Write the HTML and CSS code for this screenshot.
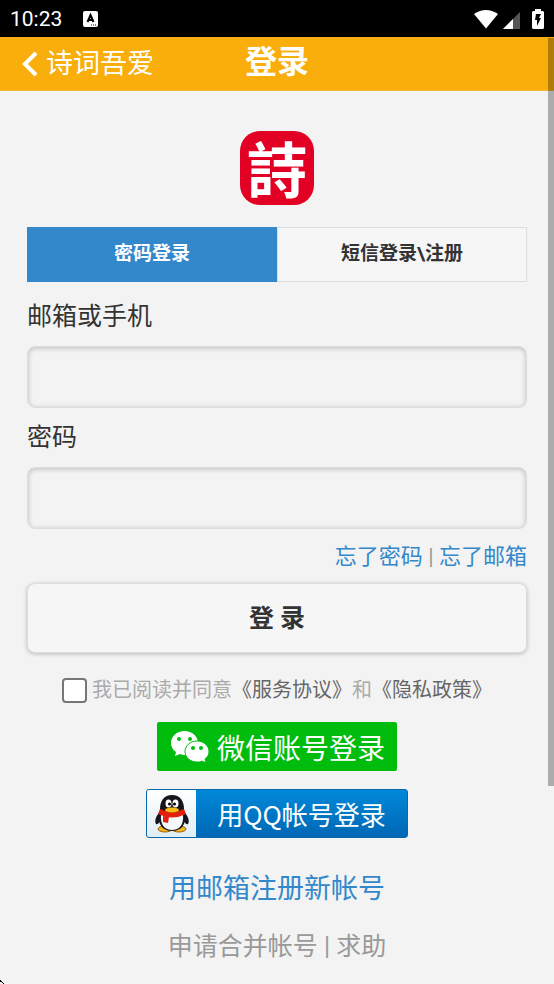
FILE: index.html
```html
<!DOCTYPE html>
<html lang="zh-CN">
<head>
  <meta charset="UTF-8">
  <meta name="viewport" content="width=device-width, initial-scale=1">
  <title>登录</title>
  <link rel="stylesheet" href="styles.css">
</head>
<body>
<div class="status">
  <span class="time">10:23</span>
  <svg class="status-app" width="15" height="16" viewBox="0 0 15 16">
    <rect width="15" height="16" rx="2" fill="#fff"/>
    <path d="M4.5 11L7.5 4L10.5 11M5.5 9H9.5" fill="none" stroke="#000" stroke-width="2"/>
    <path d="M8 14h1M10 14h1M12 14h1" stroke="#000" stroke-width="1"/>
  </svg>
  <div class="status-icons">
    <svg width="26" height="20" viewBox="0 0 26 20"><path d="M1 5Q13-3 25 5L13 19.500Z" fill="#fff"/></svg>
    <svg width="17" height="17" viewBox="0 0 17 17"><path d="M17 0V17H0Z" fill="#555"/><path d="M10 7V17H0Z" fill="#fff"/></svg>
    <svg width="12" height="20" viewBox="0 0 12 20"><path d="M3 0H9V2H11L12 3V19L11 20H1L0 19V3L1 2H3Z" fill="#fff"/><path d="M4 5H9L7 9H9L5 17V11H3Z" fill="#000"/></svg>
  </div>
</div>
<div class="page">
  <header class="header">
    <a class="back" href="#">
      <svg width="16" height="26" viewBox="0 0 16 26"><path d="M14 2L3 13L14 24" fill="none" stroke="#fff" stroke-width="4"/></svg>
      <span>诗词吾爱</span>
    </a>
    <h1>登录</h1>
  </header>
  <form class="login">
    <div class="logo" lang="zh-TW">詩</div>
    <div class="tabs">
      <button type="button" class="tab active">密码登录</button>
      <button type="button" class="tab">短信登录\注册</button>
    </div>
    <label class="label" for="user">邮箱或手机</label>
    <input class="field" type="text" id="user">
    <label class="label" for="pass">密码</label>
    <input class="field" type="password" id="pass">
    <p class="forgot"><a href="#">忘了密码</a> | <a href="#">忘了邮箱</a></p>
    <button type="submit" class="submit">登 录</button>
    <div class="agree">
      <input type="checkbox" id="agree">
      <label for="agree">我已阅读并同意<a href="#">《服务协议》</a>和<a href="#">《隐私政策》</a></label>
    </div>
    <a class="wechat" href="#">
      <svg width="38" height="32" viewBox="0 0 38 32">
        <path d="M13.500 0C6 0 0 5 0 12C0 16 2 19 5 21L4 25L9 23C11 24 13 24 15 24C24 24 27 18 27 12C27 5 21 0 13.500 0Z" fill="#fff"/>
        <path d="M26 10C19 10 14 15 14 20.500C14 27 20 31 26 31C28 31 30 31 31 30L35 32L34 28C37 26 38 23 38 20.500C38 15 33 10 26 10Z" fill="#fff" stroke="#00bd0d" stroke-width="1"/>
        <g fill="#00bd0d"><circle cx="8" cy="8" r="2"/><circle cx="19" cy="8" r="2"/><circle cx="22" cy="17" r="2"/><circle cx="30" cy="17" r="2"/></g>
      </svg>
      <span>微信账号登录</span>
    </a>
    <a class="qq" href="#">
      <span class="qq-icon">
        <svg width="34" height="38" viewBox="0 0 34 38">
          <ellipse cx="10" cy="34" rx="7" ry="3" fill="#f5b51b" stroke="#a45a08"/>
          <ellipse cx="24" cy="34" rx="7" ry="3" fill="#f5b51b" stroke="#a45a08"/>
          <path d="M6 16C1 20-1 26 1 29C3 30 5 27 6 24M28 16C33 20 35 26 33 29C31 30 29 27 28 24" fill="#14161c"/>
          <path d="M17 0C9 0 5 6 5 14L4 24C4 31 9 36 17 36S30 31 30 24L29 14C29 6 25 0 17 0Z" fill="#14161c"/>
          <path d="M6 20C5 30 10 35 17 35S29 30 28 20Z" fill="#f5f7fa"/>
          <path d="M5 14Q17 20 29 14L31 19Q17 26 3 19Z" fill="#e3200f"/>
          <path d="M8 21L14 22L13 28L8 27Z" fill="#e3200f"/>
          <ellipse cx="13.500" cy="8.500" rx="3" ry="4" fill="#fff"/>
          <ellipse cx="20.500" cy="8.500" rx="3" ry="4" fill="#fff"/>
          <circle cx="14.500" cy="9" r="1.500" fill="#000"/><circle cx="19.500" cy="9" r="1.500" fill="#000"/>
          <ellipse cx="17" cy="15" rx="7" ry="2.500" fill="#fcbd18" stroke="#a86808" stroke-width=".5"/>
        </svg>
      </span>
      <span class="qq-text">用QQ帐号登录</span>
    </a>
    <a class="register" href="#">用邮箱注册新帐号</a>
    <p class="help"><a href="#">申请合并帐号</a> | <a href="#">求助</a></p>
  </form>
  <div class="scrollbar"></div>
  <svg class="corner" width="4" height="4" viewBox="0 0 4 4"><path d="M0 0h1v1h1v1H0zM2 2h1v1H2zM3 3h1v1H3z" fill="#000"/></svg>
</div>
</body>
</html>
```
FILE: styles.css
```css
* {
  box-sizing: border-box;
}
body {
  margin: 0;
  min-height: 100vh;
  display: flex;
  flex-direction: column;
  background: #f3f3f3;
  color: #333;
  font-family: Roboto, "Noto Sans CJK SC", sans-serif;
  font-size: 25px;
}
a {
  color: #3388cc;
  text-decoration: none;
}
p, h1 {
  margin: 0;
}
svg {
  display: block;
}
button, input {
  font-family: inherit;
  color: inherit;
}
.status {
  height: 37px;
  padding: 0 10px;
  display: flex;
  align-items: center;
  background: #000;
  color: #fff;
}
.time {
  font-size: 21px;
}
.status-app {
  margin-left: 21px;
}
.status-icons {
  margin-left: auto;
  display: flex;
  align-items: flex-end;
  gap: 4px;
}
.status-icons svg:last-child {
  margin-left: 8px;
}
.page {
  position: relative;
  flex: 1;
}
.header {
  height: 54px;
  padding: 0 22px;
  display: grid;
  grid-template-columns: 1fr auto 1fr;
  align-items: center;
  background: #f9ae0c;
  border-bottom: 1px solid #f5b938;
  color: #fff;
}
.header h1 {
  font-size: 32px;
  line-height: 48px;
  padding-bottom: 4px;
}
.back {
  display: flex;
  align-items: center;
  gap: 8px;
  color: #fff;
  font-size: 27px;
  line-height: 40px;
}
.login {
  display: flex;
  flex-direction: column;
  padding: 40px 27px 16px;
}
.logo {
  align-self: center;
  width: 74px;
  height: 74px;
  margin-bottom: 22px;
  border-radius: 20px;
  background: #e20024;
  color: #fff;
  font-family: "Noto Sans CJK TC", sans-serif;
  font-size: 60px;
  font-weight: bold;
  line-height: 72px;
  text-align: center;
}
.tabs {
  display: grid;
  grid-template-columns: 1fr 1fr;
}
.tab {
  height: 55px;
  padding: 0 0 6px;
  border: 1px solid #ddd;
  background: #f6f6f6;
  font-size: 19px;
  font-weight: bold;
}
.tab.active {
  background: #3388cc;
  border-color: #3388cc;
  color: #fff;
}
.label {
  margin: 15px 0 9px;
  line-height: 40px;
}
.field {
  width: 100%;
  height: 62px;
  padding: 0 12px;
  border: 1px solid #ddd;
  border-radius: 8px;
  background: #f3f3f3;
  box-shadow: inset 0 1px 5px rgba(0,0,0,0.24);
  font-size: 25px;
}
.field + .label {
  margin: 10px 0 9px;
}
.forgot {
  margin: 12px 0 10px;
  text-align: right;
  font-size: 22px;
  line-height: 32px;
  color: #999;
}
.submit {
  height: 70px;
  padding: 0 0 4px;
  border: 1px solid #ddd;
  border-radius: 8px;
  background: #f6f6f6;
  box-shadow: 0 1px 4px rgba(0,0,0,0.24);
  font-size: 25px;
  font-weight: bold;
}
.agree {
  display: flex;
  justify-content: center;
  align-items: center;
  gap: 5px;
  margin: 21px 0 16px;
  font-size: 20px;
  line-height: 32px;
  color: #aaa;
}
.agree input {
  appearance: none;
  width: 25px;
  height: 25px;
  margin: 0;
  border: 2px solid #767676;
  border-radius: 4px;
  background: #fff;
}
.agree a {
  color: #666;
}
.wechat {
  align-self: center;
  display: flex;
  align-items: center;
  gap: 8px;
  width: 240px;
  height: 49px;
  padding-left: 14px;
  border-radius: 2px;
  background: #00bd0d;
  color: #fff;
  font-size: 28px;
}
.qq {
  align-self: center;
  display: flex;
  width: 262px;
  height: 49px;
  margin: 18px 0 31px;
  border: 1px solid #0868ad;
  border-radius: 3px;
  background: linear-gradient(#0088d8, #0068b5);
  color: #fff;
  font-family: "Noto Sans CJK SC", sans-serif;
  font-size: 26px;
  line-height: 47px;
}
.qq-icon {
  display: flex;
  align-items: center;
  justify-content: center;
  width: 49px;
  border-radius: 2px 0 0 2px;
  background: linear-gradient(#fff, #dfedf6);
}
.qq-text {
  flex: 1;
  text-align: center;
}
.register {
  align-self: center;
  font-size: 27px;
  line-height: 40px;
}
.help {
  margin-top: 18px;
  text-align: center;
  line-height: 40px;
  color: #999;
}
.help a {
  color: #999;
}
/* overlay scrollbar thumb */
.scrollbar {
  position: absolute;
  top: 1px;
  right: 0;
  width: 6px;
  height: 79%;
  background: rgba(0,0,0,0.29);
}
.corner {
  position: absolute;
  left: 0;
  bottom: 0;
}
```
